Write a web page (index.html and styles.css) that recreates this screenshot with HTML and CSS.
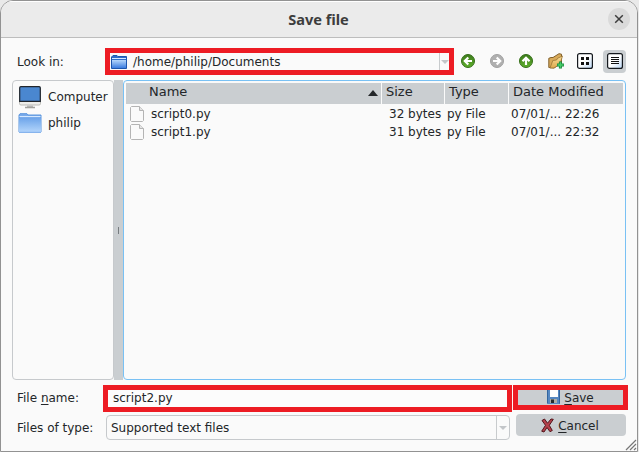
FILE: index.html
```html
<!DOCTYPE html>
<html lang="en">
<head>
<meta charset="utf-8">
<title>Save file</title>
<link rel="stylesheet" href="styles.css">
</head>
<body>
<svg class="defs" width="0" height="0">
  <defs>
    <linearGradient id="blue" x1="0" y1="0" x2="0" y2="1"><stop offset="0" stop-color="#b5d7fb"/><stop offset="1" stop-color="#3b7de0"/></linearGradient>
    <linearGradient id="pale" x1="0" y1="0" x2="0" y2="1"><stop offset="0" stop-color="#6ea5ea"/><stop offset="1" stop-color="#b3d5fb"/></linearGradient>
    <linearGradient id="green" x1="0" y1="0" x2="0" y2="1"><stop offset="0" stop-color="#3d7a1c"/><stop offset="1" stop-color="#5eb02c"/></linearGradient>
    <linearGradient id="tan" x1="0" y1="0" x2="0" y2="1"><stop offset="0" stop-color="#f8df9b"/><stop offset="1" stop-color="#dfa94d"/></linearGradient>
    <linearGradient id="tile" x1="0" y1="0" x2="1" y2="1"><stop offset=".5" stop-color="#fff"/><stop offset="1" stop-color="#b9d6f5"/></linearGradient>
    <symbol id="page" viewBox="0 0 14 16"><path d="M1.500 .5h8l4 4v10l-1 1h-11l-1-1v-13z" fill="#fafafa" stroke="#b4b4b4"/><path d="M9.500 .5v4h4" fill="#e4e4e4" stroke="#b4b4b4"/></symbol>
  </defs>
</svg>
<div class="window">
  <header class="titlebar">
    <h1>Save file</h1>
    <button class="close" aria-label="Close"><svg width="10" height="10" viewBox="0 0 10 10"><path d="M1.200 1.200l7.600 7.600M8.800 1.200L1.200 8.800" stroke="#3d3d3d" stroke-width="1.500"/></svg></button>
  </header>
  <main>
    <div class="toolbar">
      <label>Look in:</label>
      <div class="path marked">
        <svg width="16" height="14" viewBox="0 0 16 14"><path d="M.5 13.500V2L2 .5h4L7 1.500h8.500v12z" fill="#2d6cc9" stroke="#1c56ae"/><path d="M1 3.500h14" stroke="#d6e9ff"/><path d="M1 5h14v8H1z" fill="url(#blue)"/></svg>
        <span>/home/philip/Documents</span>
        <i class="drop"></i>
      </div>
      <div class="tools">
        <svg width="14" height="14" viewBox="0 0 14 14"><circle cx="7" cy="7" r="6.500" fill="url(#green)" stroke="#356f1a"/><path d="M7.300 3.500L3.800 7l3.500 3.500M4 7h7" fill="none" stroke="#fff" stroke-width="2.200"/></svg>
        <svg width="14" height="14" viewBox="0 0 14 14"><circle cx="7" cy="7" r="6.500" fill="#b0b0b0" stroke="#a0a0a0"/><path d="M6.700 3.500L10.200 7l-3.500 3.500M10 7H3" fill="none" stroke="#fff" stroke-width="2.200"/></svg>
        <svg width="14" height="14" viewBox="0 0 14 14"><circle cx="7" cy="7" r="6.500" fill="url(#green)" stroke="#356f1a"/><path d="M3.500 7.300L7 3.800l3.500 3.500M7 4v7" fill="none" stroke="#fff" stroke-width="2.200"/></svg>
        <svg width="16" height="16" viewBox="0 0 16 16"><path d="M.8 14.500V5.300L3 4.500h2l6-3.800 2.500.5V10L6 15z" fill="#d9aa59" stroke="#80602c"/><path d="M2 15L4.800 7.500l3.700-.5 1.200-1.800L14.500 3 12 11l-6 4z" fill="url(#tan)" stroke="#9b7535" stroke-width=".8"/><path d="M12.400 8.500v7M9 12h6.900" stroke="#168438" stroke-width="3"/><path d="M12.400 9.200v5.600M9.600 12h5.600" stroke="#45ce69" stroke-width="1.500"/></svg>
        <svg width="16" height="16" viewBox="0 0 16 16"><rect x=".6" y=".6" width="14.800" height="14.800" rx="2" fill="url(#tile)" stroke="#15191e" stroke-width="1.200"/><path d="M4 4h3v3H4zM9 4h3v3H9zM4 9h3v3H4zM9 9h3v3H9z" fill="#111"/></svg>
        <span class="pressed"><svg width="16" height="16" viewBox="0 0 16 16"><rect x=".6" y=".6" width="14.800" height="14.800" rx="2" fill="url(#tile)" stroke="#15191e" stroke-width="1.200"/><path d="M4 4.500h8M4 6.500h8M4 8.500h8M4 10.500h8" stroke="#111"/></svg></span>
      </div>
    </div>
    <div class="panes">
      <ul class="places">
        <li><svg width="24" height="23" viewBox="0 0 24 23"><rect x="1.500" y=".5" width="21" height="18.500" rx="1.500" fill="#ededea" stroke="#b9b9b5"/><path d="M1.700 15.300V2Q1.700 .7 3 .7h18Q22.300 .7 22.300 2v13.300z" fill="#4a87d0" stroke="#20252c" stroke-width="1.200"/><path d="M9 19.500h6V21.500H9z" fill="#bbb"/><path d="M7 21.500h10" stroke="#a0a09c" stroke-width="1.500"/></svg>Computer</li>
        <li><svg width="24" height="20" viewBox="0 0 24 20"><path d="M1 19V2L2 .7h7L10 2h13v17z" fill="#79abeb" stroke="#5c96dd"/><path d="M1.500 3.500h21" stroke="#d4e8ff"/><path d="M1 5h22v14H1z" fill="url(#pale)"/><path d="M1 19.300h22" stroke="#7fb0ee"/></svg>philip</li>
      </ul>
      <div class="splitter"><i></i></div>
      <div class="files">
        <div class="row head"><span class="name">Name<i class="sort"></i></span><span>Size</span><span>Type</span><span>Date Modified</span></div>
        <div class="row"><span class="name"><svg width="14" height="16"><use href="#page"/></svg>script0.py</span><span class="size">32 bytes</span><span>py File</span><span>07/01/... 22:26</span></div>
        <div class="row"><span class="name"><svg width="14" height="16"><use href="#page"/></svg>script1.py</span><span class="size">31 bytes</span><span>py File</span><span>07/01/... 22:32</span></div>
      </div>
    </div>
    <div class="form">
      <label>File <u>n</u>ame:</label>
      <div class="filename marked">script2.py</div>
      <button class="save marked"><svg width="13" height="15" viewBox="0 0 13 15"><path d="M0 0h13v14H1l-1-1z" fill="#5687c1"/><path d="M.5 0v13.500M12.500 0v13.500" stroke="#33659f"/><path d="M3 0h8v7H3z" fill="#fff"/><path d="M3 9h7v4H3z" fill="#a9ada8"/><path d="M4 9.500h3V13H4z" fill="#252b2d"/></svg><span><u>S</u>ave</span></button>
      <label class="second">Files of type:</label>
      <div class="filetype">Supported text files<i class="drop"></i></div>
      <button class="cancel"><svg width="13" height="15" viewBox="0 0 13 15"><path d="M1 2.500L3.500 1l3 4.200L10 1l2.300.3L8.300 7.300l3 5.200-2.300 1.200-3-4.200L3 14l-2.300-.8L4.500 7.300z" fill="#b5414c" stroke="#54161c"/></svg><span><u>C</u>ancel</span></button>
    </div>
  </main>
  <svg class="grip" width="12" height="12" viewBox="0 0 12 12"><path d="M1 11L11 1M5 11l6-6M9 11l2-2" stroke="#777" stroke-width="1.200"/></svg>
</div>
</body>
</html>
```
FILE: styles.css
```css
* { box-sizing: border-box; }
body { margin: 0; background: #e9e9e9; font: 12px/18px "DejaVu Sans", sans-serif; color: #232629; overflow: hidden; }
.defs { position: absolute; }
svg { display: block; flex: none; }
u { text-underline-offset: 2px; text-decoration-thickness: 1px; }
button { border: 0; padding: 0; font: inherit; color: inherit; }
.window { position: relative; width: 638px; height: 452px; background: #fafafa; border: 1px solid #929292; border-radius: 13px 13px 0 0; overflow: hidden; }
.titlebar { display: grid; grid-template-columns: 1fr auto 1fr; align-items: center; height: 37px; background: #ebebeb; border-top: 1px solid #fff; border-bottom: 1px solid #bdbdbd; }
h1 { grid-column: 2; margin: 0 1px 2px 0; font: bold 14.600px/22px "Noto Sans", sans-serif; color: #3d3d3d; }
.close { display: grid; place-items: center; justify-self: end; width: 22px; height: 22px; margin: 0 7px 1px 0; border-radius: 50%; background: #dadada; }
main { padding: 10px 10px 0 11px; }
.toolbar { display: flex; align-items: center; height: 27px; }
.toolbar label { width: 88px; padding-left: 5px; }
.toolbar .path { margin-left: 5px; }
.marked { border: 5px solid #ed1c24; }
.path { display: flex; align-items: center; gap: 6px; width: 349px; height: 27px; padding-left: 1px; }
.drop { display: grid; place-items: center; width: 11px; align-self: stretch; margin-left: auto; border-left: 1px solid #c8cbcd; }
.drop::after { content: ""; border: 4px solid transparent; border-top-color: #c3c6c9; border-bottom: 0; }
.path .drop { width: 10px; }
.tools { display: flex; align-items: center; flex: 1; gap: 15px; padding: 0 0 1px 7px; }
.tools svg:nth-child(4) { margin-right: -2px; }
.pressed { display: grid; place-items: center; width: 23px; height: 23px; margin-left: -5px; border-radius: 4px; background: #caced1; }
.panes { display: flex; height: 300px; margin-top: 5px; }
.places { width: 102px; margin: 0; padding: 3px 6px; border: 1px solid #c6c9cc; border-radius: 4px; list-style: none; }
.places li { display: flex; align-items: center; gap: 6px; height: 26px; margin-left: -1px; white-space: nowrap; }
.splitter { display: grid; place-items: center; width: 9px; background: #caced1; }
.splitter i { width: 1px; height: 7px; background: #777c80; }
.files { width: 503px; padding: 2px; border: 1px solid #79c1f4; border-radius: 4px; }
.row { display: grid; grid-template-columns: 256px 63px 64px 1fr; height: 18px; }
.row span { padding-left: 2px; white-space: nowrap; }
.row .name { display: flex; align-items: center; gap: 7px; padding-left: 4px; }
.row .size { padding-left: 7px; }
.head { height: 21px; margin-bottom: 1px; background: #caced1; font-size: 13px; line-height: 17px; }
.row.head span { padding-left: 4px; border-right: 1px solid #fafafa; }
.row.head span:last-child { border: 0; }
.row.head .name { padding: 0 3px 4px 23px; }
.sort { margin: 3px 0 0 auto; border: 5px solid transparent; border-bottom: 6px solid #232629; border-top: 0; }
.form { display: grid; grid-template-columns: 91px 409px 115px; grid-template-rows: 27px 25px; row-gap: 3px; margin-top: 5px; }
.form label { padding: 4px 0 0 5px; white-space: nowrap; }
.filename { padding-left: 5px; line-height: 16px; background: #fcfcfc; }
.save { display: flex; justify-content: center; gap: 4px; width: 115px; height: 25px; margin-left: 1px; background: #caced1; }
.save span { line-height: 16px; }
.filetype { display: flex; width: 404px; height: 25px; margin-left: 3px; padding-left: 4px; line-height: 24px; border: 1px solid #c6c9cc; border-radius: 4px; }
.filetype .drop { width: 13px; }
.cancel { display: flex; align-items: center; justify-content: center; gap: 4px; width: 110px; height: 22px; margin: -1px 0 0 4px; padding: 1px 2px 0 0; border-radius: 4px; background: #caced1; }
.cancel svg { margin-bottom: 1px; }
.grip { position: absolute; right: 0; bottom: 0; }
```
